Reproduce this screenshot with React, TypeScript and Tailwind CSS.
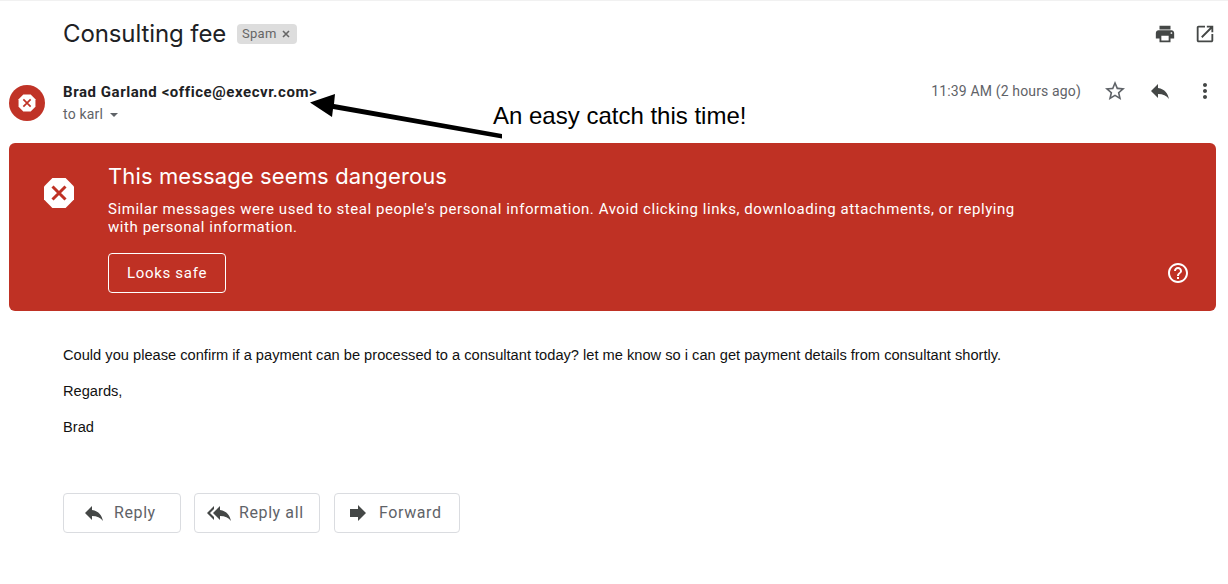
const ICONS = {
  print: "M19 8H5c-1.66 0-3 1.34-3 3v6h4v4h12v-4h4v-6c0-1.66-1.34-3-3-3zm-3 11H8v-5h8v5zm3-7c-.55 0-1-.45-1-1s.45-1 1-1 1 .45 1 1-.45 1-1 1zm-1-9H6v4h12V3z",
  open: "M19 19H5V5h7V3H5c-1.11 0-2 .9-2 2v14c0 1.1.89 2 2 2h14c1.1 0 2-.9 2-2v-7h-2v7zM14 3v2h3.59l-9.83 9.83 1.41 1.41L19 6.41V10h2V3h-7z",
  star: "M22 9.24l-7.19-.62L12 2 9.19 8.63 2 9.24l5.46 4.73L5.82 21 12 17.27 18.18 21l-1.63-7.03L22 9.24zM12 15.4l-3.76 2.27 1-4.28-3.32-2.88 4.38-.38L12 6.1l1.71 4.04 4.38.38-3.32 2.88 1 4.28L12 15.4z",
  reply: "M10 9V5l-7 7 7 7v-4.1c5 0 8.5 1.6 11 5.1-1-5-4-10-11-11z",
  replyAll: "M7 8V5l-7 7 7 7v-3l-4-4 4-4zm6 1V5l-7 7 7 7v-4.1c5 0 8.5 1.6 11 5.1-1-5-4-10-11-11z",
  forward: "M12 8V4l8 8-8 8v-4H4V8z",
  more: "M12 8c1.1 0 2-.9 2-2s-.9-2-2-2-2 .9-2 2 .9 2 2 2zm0 2c-1.1 0-2 .9-2 2s.9 2 2 2 2-.9 2-2-.9-2-2-2zm0 6c-1.1 0-2 .9-2 2s.9 2 2 2 2-.9 2-2-.9-2-2-2z",
  help: "M11 18h2v-2h-2v2zm1-16C6.48 2 2 6.48 2 12s4.48 10 10 10 10-4.48 10-10S17.52 2 12 2zm0 18c-4.41 0-8-3.59-8-8s3.59-8 8-8 8 3.59 8 8-3.59 8-8 8zm0-14c-2.21 0-4 1.79-4 4h2c0-1.1.9-2 2-2s2 .9 2 2c0 2-3 1.75-3 5h2c0-2.25 3-2.5 3-5 0-2.21-1.79-4-4-4z",
};

function Icon({ d, className }: { d: string; className: string }) {
  return (
    <svg className={className} viewBox="0 0 24 24" fill="currentColor">
      <path d={d} />
    </svg>
  );
}

function Octagon({ className, cross }: { className: string; cross: string }) {
  return (
    <svg className={className} viewBox="0 0 32 32">
      <path d="M9.4 1h13.2L31 9.4v13.2L22.6 31H9.4L1 22.6V9.4z" fill="#fff" />
      <path d="M9.5 9.5l13 13M22.5 9.5l-13 13" stroke={cross} strokeWidth="3" fill="none" />
    </svg>
  );
}

function ActionButton({ icon, label, className }: { icon: string; label: string; className: string }) {
  return (
    <button className={`flex h-10 items-center rounded border border-[#dadce0] text-[16px] tracking-[0.6px] text-[#5f6368] ${className}`}>
      <Icon d={icon} className="h-6 w-6 text-[#444746]" />
      <span>{label}</span>
    </button>
  );
}

export default function App() {
  return (
    <div className="relative h-[584px] w-[1228px] overflow-hidden border-t border-[#f1f1f1] bg-white font-['Roboto',sans-serif]">
      <div className="flex h-[65px] items-center pl-[63px] pr-[12px]">
        <h1 className="w-[163px] whitespace-nowrap font-['Inter',sans-serif] text-[24px] leading-none tracking-[-0.1px] text-[#202124]">Consulting fee</h1>
        <span className="ml-[11px] flex h-5 w-[60px] items-center gap-[5px] rounded bg-[#dddddd] px-[5px] text-[13px] tracking-[0.3px] text-[#666666]">
          Spam
          <svg className="h-2 w-2" viewBox="0 0 8 8">
            <path d="M1 1l6 6M7 1L1 7" stroke="#666" strokeWidth="1.6" />
          </svg>
        </span>
        <div className="ml-auto flex items-center gap-[18px]">
          <Icon d={ICONS.print} className="h-[22px] w-[22px] text-[#444746]" />
          <Icon d={ICONS.open} className="h-[22px] w-[22px] text-[#444746]" />
        </div>
      </div>

      <div className="mt-[15px] flex h-[46px] pl-[9px] pr-[11px]">
        <div className="mt-[4px] flex h-9 w-9 items-center justify-center rounded-full bg-[#c03327]">
          <Octagon className="h-[18px] w-[18px]" cross="#c03327" />
        </div>
        <div className="ml-[18px] pt-px">
          <div className="text-[15px] font-bold leading-5 tracking-[0.56px] text-[#202124]">Brad Garland &lt;office@execvr.com&gt;</div>
          <div className="mt-[2px] flex items-center gap-[7px] text-[14px] leading-5 tracking-[0.2px] text-[#5f6368]">
            to karl
            <span className="mt-[1px] h-0 w-0 border-x-[4px] border-t-[4px] border-x-transparent border-t-[#5f6368]" />
          </div>
        </div>
        <div className="ml-auto flex h-5 items-center">
          <span className="text-[14px] tracking-[0.15px] text-[#5f6368]">11:39 AM (2 hours ago)</span>
          <Icon d={ICONS.star} className="ml-[22px] h-6 w-6 text-[#5f6368]" />
          <Icon d={ICONS.reply} className="ml-[21px] h-6 w-6 text-[#444746]" />
          <Icon d={ICONS.more} className="ml-[21px] h-6 w-6 text-[#444746]" />
        </div>
      </div>

      <div className="ml-[9px] mt-[16px] flex h-[168px] w-[1207px] rounded-md bg-[#bf3124] text-white">
        <div className="ml-[34px] mt-[34px]">
          <Octagon className="h-8 w-8" cross="#bf3124" />
        </div>
        <div className="ml-[33px] mt-[19px]">
          <div className="whitespace-nowrap font-['Inter',sans-serif] text-[22px] leading-7 tracking-[0.12px]">This message seems dangerous</div>
          <p className="mt-[10px] w-[925px] text-[15px] leading-[18px] tracking-[0.565px]">
            Similar messages were used to steal people's personal information. Avoid clicking links, downloading attachments, or replying with personal information.
          </p>
          <button className="mt-[17px] h-10 w-[118px] rounded border border-white text-[15px] tracking-[0.7px]">Looks safe</button>
        </div>
        <Icon d={ICONS.help} className="ml-auto mr-[26px] mt-[118px] h-6 w-6" />
      </div>

      <div className="ml-[63px] mt-[35px] flex flex-col gap-[18px] font-['Liberation_Sans',sans-serif] text-[14.65px] leading-[18px] text-[#111111]">
        <p>Could you please confirm if a payment can be processed to a consultant today? let me know so i can get payment details from consultant shortly.</p>
        <p>Regards,</p>
        <p>Brad</p>
      </div>

      <div className="ml-[63px] mt-[57px] flex gap-[13px]">
        <ActionButton icon={ICONS.reply} label="Reply" className="w-[118px] gap-[8px] pl-[18px]" />
        <ActionButton icon={ICONS.replyAll} label="Reply all" className="w-[126px] gap-[8px] pl-[12px]" />
        <ActionButton icon={ICONS.forward} label="Forward" className="ml-px w-[126px] gap-[9px] pl-[11px]" />
      </div>

      <svg className="absolute left-[305px] top-[88px] h-[52px] w-[200px]" viewBox="0 0 200 52">
        <path d="M5 13.5L30 5L29 15L197 45L197 49.5L28 20L27 28z" fill="#000" />
      </svg>
      <div className="absolute left-[493px] top-[101px] font-['Liberation_Sans',sans-serif] text-[24px] leading-7 text-black">An easy catch this time!</div>
    </div>
  );
}
